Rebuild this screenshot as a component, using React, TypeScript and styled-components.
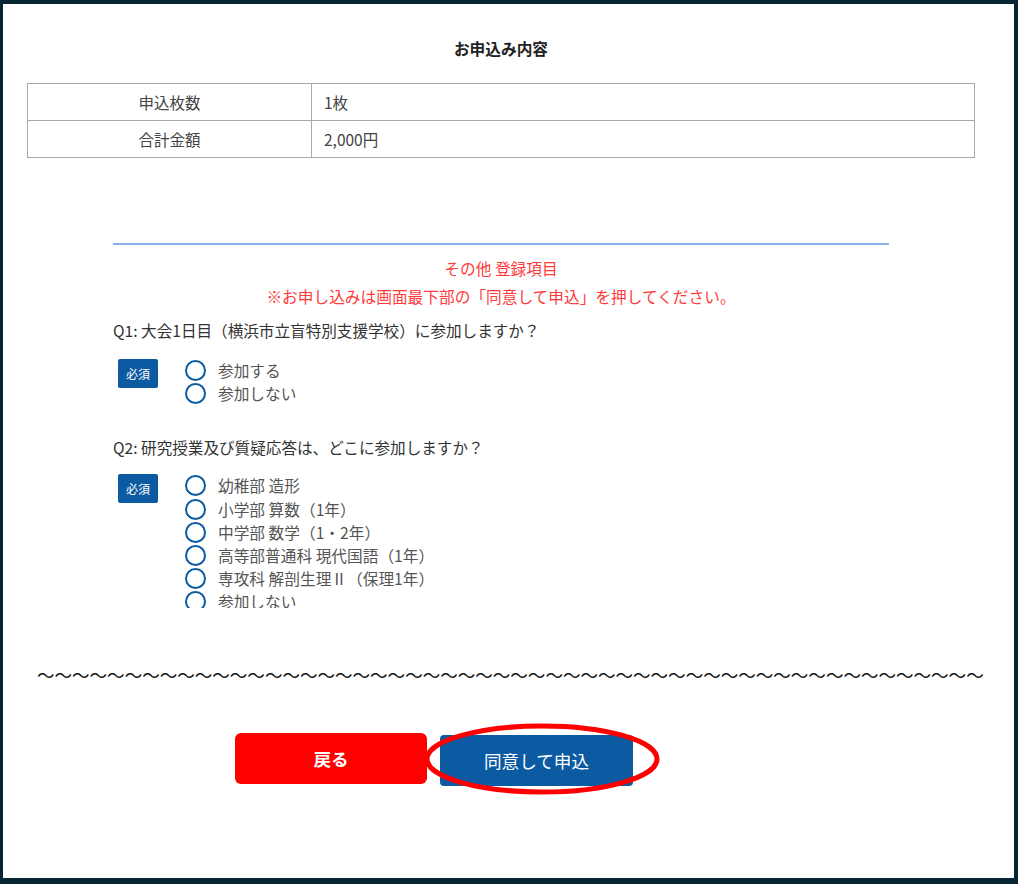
import React from 'react';
import styled, { createGlobalStyle } from 'styled-components';

const GlobalStyle = createGlobalStyle`
  html, body {
    margin: 0;
    padding: 0;
    background: #062634;
  }
  body {
    font-family: "Noto Sans CJK JP", "Noto Sans", sans-serif;
  }
  * {
    box-sizing: border-box;
  }
`;

const Frame = styled.div`
  width: 1018px;
  height: 884px;
  padding: 4px 4px 6px 3px;
  background: #062634;
`;

const Panel = styled.div`
  background: #ffffff;
  height: 100%;
  padding: 35px 39px 0 24px;
  overflow: hidden;
`;

const Title = styled.h2`
  margin: 0 0 24px;
  font-size: 15.7px;
  line-height: 20px;
  font-weight: 700;
  color: #222;
  text-align: center;
`;

const SummaryTable = styled.table`
  width: 100%;
  border-collapse: collapse;
  font-size: 15.5px;
  color: #444;
`;

const LabelCell = styled.th`
  width: 284px;
  height: 37px;
  border: 1px solid #a9a9a9;
  font-weight: 400;
  text-align: center;
  padding: 0;
`;

const ValueCell = styled.td`
  height: 37px;
  border: 1px solid #a9a9a9;
  padding: 0 12px;
`;

const Section = styled.div`
  width: 776px;
  margin: 85px auto 0;
`;

const Divider = styled.hr`
  margin: 0;
  border: none;
  height: 2px;
  background: #8bb1ea;
`;

const Notice = styled.p`
  margin: 0;
  font-size: 15.7px;
  line-height: 28px;
  color: #ff3a3a;
  text-align: center;
  &:first-of-type {
    margin-top: 10px;
  }
`;

const Question = styled.p<{ $gap?: number }>`
  margin: ${(p) => p.$gap ?? 0}px 0 0;
  font-size: 15.6px;
  line-height: 28px;
  color: #333;
`;

const AnswerRow = styled.div<{ $gap: number }>`
  display: flex;
  align-items: flex-start;
  margin-top: ${(p) => p.$gap}px;
  padding-left: 5px;
`;

const Badge = styled.span`
  flex: none;
  width: 40px;
  height: 29px;
  border-radius: 2px;
  background: #0b5aa2;
  color: #fff;
  font-size: 12px;
  display: flex;
  align-items: center;
  justify-content: center;
`;

const Options = styled.div`
  display: flex;
  flex-direction: column;
  margin-left: 27px;
`;

const Option = styled.label`
  display: flex;
  align-items: center;
  height: 23.2px;
  font-size: 15.7px;
  color: #555;
`;

const Radio = styled.span`
  flex: none;
  width: 21px;
  height: 21px;
  border: 2.5px solid #0b5aa2;
  border-radius: 50%;
  margin-right: 12px;
`;

const Clip = styled.div`
  height: 203px;
  overflow: hidden;
`;

const Waves = styled.div`
  margin: 55px 0 0 10px;
  width: 960px;
  font-size: 17.55px;
  line-height: 24px;
  color: #111;
  white-space: nowrap;
  overflow: hidden;
`;

const ButtonRow = styled.div`
  display: flex;
  align-items: flex-start;
  gap: 13px;
  margin: 46px 0 0 208px;
`;

const Button = styled.button<{ $variant: 'back' | 'submit' }>`
  width: ${(p) => (p.$variant === 'back' ? 192 : 193)}px;
  height: 51px;
  border: none;
  border-radius: ${(p) => (p.$variant === 'back' ? 6 : 4)}px;
  background: ${(p) => (p.$variant === 'back' ? '#ff0000' : '#0b5aa2')};
  color: #fff;
  font-family: inherit;
  font-size: 17.6px;
  font-weight: ${(p) => (p.$variant === 'back' ? 700 : 400)};
  margin-top: ${(p) => (p.$variant === 'back' ? 0 : 2)}px;
  cursor: pointer;
`;

const Marked = styled.div`
  position: relative;
`;

const Ring = styled.svg`
  position: absolute;
  left: -16px;
  top: -10px;
  width: 236px;
  height: 72px;
  pointer-events: none;
  overflow: visible;
`;

const q1Options = ['参加する', '参加しない'];
const q2Options = [
  '幼稚部 造形',
  '小学部 算数（1年）',
  '中学部 数学（1・2年）',
  '高等部普通科 現代国語（1年）',
  '専攻科 解剖生理Ⅱ（保理1年）',
  '参加しない',
];

const OptionList = ({ items }: { items: string[] }) => (
  <Options>
    {items.map((item) => (
      <Option key={item}>
        <Radio />
        {item}
      </Option>
    ))}
  </Options>
);

export default function App() {
  return (
    <>
      <GlobalStyle />
      <Frame>
        <Panel>
          <Title>お申込み内容</Title>
          <SummaryTable>
            <tbody>
              <tr>
                <LabelCell>申込枚数</LabelCell>
                <ValueCell>1枚</ValueCell>
              </tr>
              <tr>
                <LabelCell>合計金額</LabelCell>
                <ValueCell>2,000円</ValueCell>
              </tr>
            </tbody>
          </SummaryTable>

          <Section>
            <Divider />
            <Notice>その他 登録項目</Notice>
            <Notice>※お申し込みは画面最下部の「同意して申込」を押してください。</Notice>
            <Question $gap={5}>Q1: 大会1日目（横浜市立盲特別支援学校）に参加しますか？</Question>
            <AnswerRow $gap={15}>
              <Badge>必須</Badge>
              <OptionList items={q1Options} />
            </AnswerRow>
            <Clip>
              <Question $gap={28}>Q2: 研究授業及び質疑応答は、どこに参加しますか？</Question>
              <AnswerRow $gap={13}>
                <Badge>必須</Badge>
                <OptionList items={q2Options} />
              </AnswerRow>
            </Clip>
          </Section>

          <Waves>{'～'.repeat(54)}</Waves>

          <ButtonRow>
            <Button $variant="back">戻る</Button>
            <Marked>
              <Button $variant="submit">同意して申込</Button>
              <Ring viewBox="0 0 236 72">
                <ellipse cx="118" cy="36" rx="115" ry="33" fill="none" stroke="#ff0000" strokeWidth="5" />
              </Ring>
            </Marked>
          </ButtonRow>
        </Panel>
      </Frame>
    </>
  );
}
